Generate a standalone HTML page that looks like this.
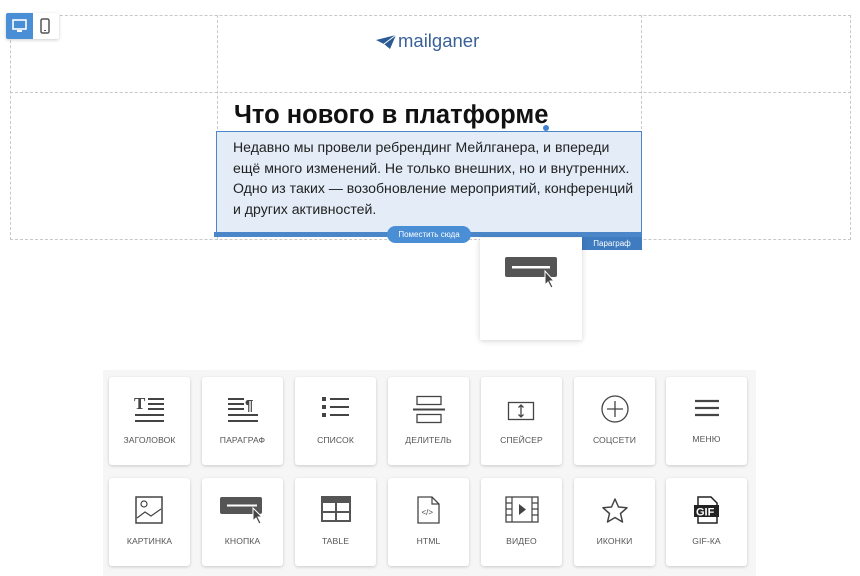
<!DOCTYPE html>
<html><head><meta charset="utf-8"><style>
*{margin:0;padding:0;box-sizing:border-box}
body{width:860px;height:576px;background:#fff;position:relative;overflow:hidden;font-family:"Liberation Sans",sans-serif}
.a{position:absolute}
.dv{border-left:1px dashed #c8c8c8}
.dh{border-top:1px dashed #c8c8c8}
.card{position:absolute;width:81px;height:88px;background:#fff;border-radius:3px;box-shadow:0 1px 3px rgba(0,0,0,.18)}
.card svg{position:absolute;left:50%;top:18px;transform:translateX(-50%)}
.card span{position:absolute;left:0;right:0;top:58px;text-align:center;font-size:8.6px;color:#555;letter-spacing:.1px}
</style></head><body>
<div class="a" style="left:10px;top:15px;width:841px;height:225px;border:1px dashed #c8c8c8"></div>
<div class="a dv" style="left:217px;top:15px;height:225px"></div>
<div class="a dv" style="left:641px;top:15px;height:225px"></div>
<div class="a dh" style="left:10px;top:92px;width:841px"></div>
<div class="a" style="left:6px;top:13px;width:53px;height:26px;background:#fff;box-shadow:0 1px 3px rgba(0,0,0,.2);border-radius:2px"></div>
<div class="a" style="left:6px;top:13px;width:27px;height:26px;background:#4a8fd6;border-radius:2px 0 0 2px"></div>
<svg class="a" style="left:12px;top:19px" width="15" height="14"><rect x="1" y="1" width="13" height="9" fill="none" stroke="#fff" stroke-width="1.6"/><rect x="5" y="11" width="5" height="2" fill="#fff"/></svg>
<svg class="a" style="left:40px;top:18px" width="10" height="16"><rect x="1" y="1" width="8" height="14" rx="1.5" fill="none" stroke="#555" stroke-width="1.5"/><rect x="4" y="12" width="2" height="1" fill="#555"/></svg>
<svg class="a" style="left:375px;top:34px" width="22" height="16"><path d="M1 6 L21 1 L15 15 L9 10 Z" fill="#2c5a94"/><path d="M9 10 L21 1" stroke="#fff" stroke-width="1"/></svg>
<div class="a" style="left:398px;top:30px;font-size:18.5px;color:#3a6299">mailganer</div>
<div class="a" style="left:234px;top:101px;font-size:25.5px;font-weight:bold;color:#111">Что нового в платформе</div>
<div class="a" style="left:216px;top:131px;width:426px;height:104px;background:#e3ecf7;border:1.5px solid #4a86c8"></div>
<div class="a" style="left:543px;top:125px;width:6px;height:6px;border-radius:50%;background:#3f82d0"></div>
<div class="a" style="left:233px;top:137px;width:405px;font-size:14.1px;line-height:20.7px;color:#222">Недавно мы провели ребрендинг Мейлганера, и впереди ещё много изменений. Не только внешних, но и внутренних. Одно из таких — возобновление мероприятий, конференций и других активностей.</div>
<div class="a" style="left:214px;top:232px;width:428px;height:5px;background:#4a86c8"></div>
<div class="a" style="left:387px;top:226px;width:84px;height:17px;border-radius:9px;background:#4a8fd6;color:#fff;font-size:8px;text-align:center;line-height:17px">Поместить сюда</div>
<div class="a" style="left:582px;top:237px;width:60px;height:13px;background:#3f7bbf;color:#fff;font-size:8px;text-align:center;line-height:13px">Параграф</div>
<div class="a" style="left:480px;top:238px;width:102px;height:102px;background:#fff;box-shadow:0 1px 6px rgba(0,0,0,.18);border-radius:2px"></div>
<svg class="a" style="left:505px;top:257px" width="54" height="32"><rect x="0" y="0" width="52" height="20" rx="2" fill="#555"/><rect x="7" y="9" width="38" height="2.5" fill="#fff"/><path d="M40 14 L40 28 L43 25 L46 31 L48 30 L45 24 L49 24 Z" fill="#444" stroke="#fff" stroke-width="1"/></svg>
<div class="a" style="left:103px;top:370px;width:653px;height:206px;background:#f6f6f6"></div>

<div class="card" style="left:109px;top:377px"><svg width="32" height="30"><text x="0" y="14" font-family="Liberation Serif" font-weight="bold" font-size="17" fill="#444">T</text><g stroke="#444" stroke-width="2"><path d="M14 4h16M14 9h16M14 14h16M1 20h29M1 26h29"/></g></svg><span>ЗАГОЛОВОК</span></div>
<div class="card" style="left:202px;top:377px"><svg width="32" height="30"><g stroke="#444" stroke-width="2"><path d="M1 4h16M1 9h16M1 14h16M1 20h30M1 26h30"/></g><text x="18" y="15" font-family="Liberation Sans" font-weight="bold" font-size="15" fill="#444">¶</text></svg><span>ПАРАГРАФ</span></div>
<div class="card" style="left:295px;top:377px"><svg width="30" height="26"><g fill="#444"><rect x="1" y="2" width="4" height="4"/><rect x="1" y="10" width="4" height="4"/><rect x="1" y="18" width="4" height="4"/></g><g stroke="#444" stroke-width="2"><path d="M9 4h19M9 12h19M9 20h19"/></g></svg><span>СПИСОК</span></div>
<div class="card" style="left:388px;top:377px"><svg width="34" height="30"><rect x="5" y="1.5" width="24" height="8" fill="none" stroke="#444" stroke-width="1.3"/><path d="M1 14.5h32" stroke="#444" stroke-width="2"/><rect x="5" y="19.5" width="24" height="8" fill="none" stroke="#444" stroke-width="1.3"/></svg><span>ДЕЛИТЕЛЬ</span></div>
<div class="card" style="left:481px;top:377px"><svg width="30" height="30" style="top:24px"><rect x="1.5" y="1.5" width="25" height="17" fill="none" stroke="#444" stroke-width="1.3"/><path d="M14 4v12M11.5 6.5L14 4l2.5 2.5M11.5 13.5L14 16l2.5-2.5" fill="none" stroke="#444" stroke-width="1.3"/></svg><span>СПЕЙСЕР</span></div>
<div class="card" style="left:574px;top:377px"><svg width="30" height="30"><circle cx="15" cy="14" r="13" fill="none" stroke="#444" stroke-width="1.3"/><path d="M15 6v16M7 14h16" stroke="#444" stroke-width="1.3"/></svg><span>СОЦСЕТИ</span></div>
<div class="card" style="left:666px;top:377px"><svg width="30" height="30"><g stroke="#444" stroke-width="2.3"><path d="M3 6h24M3 13h24M3 20h24"/></g></svg><span style="top:57px">МЕНЮ</span></div>

<div class="card" style="left:109px;top:478px"><svg width="30" height="30"><rect x="1" y="1" width="26" height="26" fill="none" stroke="#444" stroke-width="1.5"/><circle cx="9" cy="8" r="3" fill="none" stroke="#444" stroke-width="1.2"/><path d="M2 22l8-6 6 4 10-7" fill="none" stroke="#444" stroke-width="1.2"/></svg><span>КАРТИНКА</span></div>
<div class="card" style="left:202px;top:478px"><svg width="46" height="30"><rect x="0" y="1" width="42" height="17" rx="2" fill="#555"/><rect x="7" y="8.5" width="30" height="2" fill="#fff"/><path d="M33 12 L33 25 L36 22 L39 28 L41 27 L38 21 L42 21 Z" fill="#444" stroke="#fff" stroke-width="1"/></svg><span>КНОПКА</span></div>
<div class="card" style="left:295px;top:478px"><svg width="30" height="30"><rect x="0" y="0" width="30" height="26" fill="#555"/><rect x="2" y="7" width="12" height="8" fill="#fff"/><rect x="16" y="7" width="12" height="8" fill="#fff"/><rect x="2" y="17" width="12" height="7" fill="#fff"/><rect x="16" y="17" width="12" height="7" fill="#fff"/></svg><span>TABLE</span></div>
<div class="card" style="left:388px;top:478px"><svg width="30" height="30"><path d="M4 1h14l7 7v19H4z" fill="none" stroke="#444" stroke-width="1.3"/><path d="M18 1v7h7" fill="none" stroke="#444" stroke-width="1.2"/><text x="7.5" y="19" font-size="8" fill="#444" font-family="Liberation Sans">&lt;/&gt;</text></svg><span>HTML</span></div>
<div class="card" style="left:481px;top:478px"><svg width="34" height="30"><rect x="1" y="1" width="32" height="25" fill="none" stroke="#444" stroke-width="1.3"/><path d="M7 1v25M27 1v25M1 7h6M1 13h6M1 19h6M27 7h6M27 13h6M27 19h6" stroke="#444" stroke-width="1.2"/><path d="M14 8l7 5.5-7 5.5z" fill="#444"/></svg><span>ВИДЕО</span></div>
<div class="card" style="left:574px;top:478px"><svg width="30" height="30"><path d="M15 3l3.5 8 8.5.8-6.5 5.7 2 8.5L15 21.5 7.5 26l2-8.5L3 11.8l8.5-.8z" fill="none" stroke="#444" stroke-width="1.5" stroke-linejoin="round"/></svg><span>ИКОНКИ</span></div>
<div class="card" style="left:666px;top:478px"><svg width="30" height="30"><path d="M6 1h13l6 6v20H6z" fill="none" stroke="#222" stroke-width="1.5"/><rect x="2" y="9" width="25" height="12" fill="#222"/><text x="4" y="19.5" font-size="11" font-weight="bold" fill="#fff" font-family="Liberation Sans">GIF</text></svg><span>GIF-КА</span></div>
</body></html>
